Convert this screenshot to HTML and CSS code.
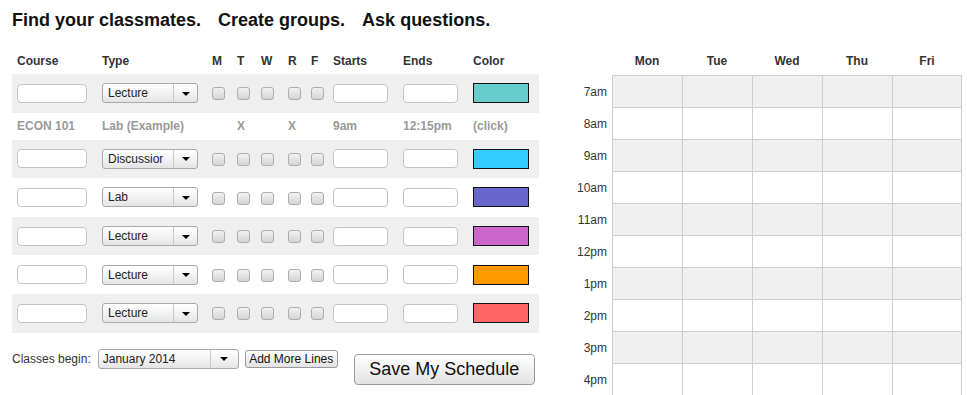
FILE: index.html
```html
<!DOCTYPE html>
<html>
<head>
<meta charset="utf-8">
<link rel="stylesheet" href="styles.css">
</head>
<body>
<div class="page">
  <h1 class="title"><span>Find your classmates.</span><span>Create groups.</span><span>Ask questions.</span></h1>
  <div class="main">
    <div class="left">
      <table class="sched">
        <colgroup>
          <col class="c-course"><col class="c-type"><col class="c-m"><col class="c-t"><col class="c-w"><col class="c-r"><col class="c-f"><col class="c-start"><col class="c-end"><col class="c-color">
        </colgroup>
        <tr class="head">
          <th>Course</th><th>Type</th><th>M</th><th>T</th><th>W</th><th>R</th><th>F</th><th>Starts</th><th>Ends</th><th>Color</th>
        </tr>
        <tr class="row gray">
          <td><span class="txt"></span></td>
          <td><span class="sel"><span class="sel-text">Lecture</span><span class="sel-arrow"><i></i></span></span></td>
          <td><span class="cb"></span></td><td><span class="cb"></span></td><td><span class="cb"></span></td><td><span class="cb"></span></td><td><span class="cb"></span></td>
          <td><span class="txt short"></span></td><td><span class="txt short"></span></td>
          <td><span class="swatch teal"></span></td>
        </tr>
        <tr class="example">
          <td>ECON 101</td><td>Lab (Example)</td><td></td><td>X</td><td></td><td>X</td><td></td><td>9am</td><td>12:15pm</td><td>(click)</td>
        </tr>
        <tr class="row gray">
          <td><span class="txt"></span></td>
          <td><span class="sel"><span class="sel-text">Discussion</span><span class="sel-arrow"><i></i></span></span></td>
          <td><span class="cb"></span></td><td><span class="cb"></span></td><td><span class="cb"></span></td><td><span class="cb"></span></td><td><span class="cb"></span></td>
          <td><span class="txt short"></span></td><td><span class="txt short"></span></td>
          <td><span class="swatch sky"></span></td>
        </tr>
        <tr class="row">
          <td><span class="txt"></span></td>
          <td><span class="sel"><span class="sel-text">Lab</span><span class="sel-arrow"><i></i></span></span></td>
          <td><span class="cb"></span></td><td><span class="cb"></span></td><td><span class="cb"></span></td><td><span class="cb"></span></td><td><span class="cb"></span></td>
          <td><span class="txt short"></span></td><td><span class="txt short"></span></td>
          <td><span class="swatch violet"></span></td>
        </tr>
        <tr class="row gray">
          <td><span class="txt"></span></td>
          <td><span class="sel"><span class="sel-text">Lecture</span><span class="sel-arrow"><i></i></span></span></td>
          <td><span class="cb"></span></td><td><span class="cb"></span></td><td><span class="cb"></span></td><td><span class="cb"></span></td><td><span class="cb"></span></td>
          <td><span class="txt short"></span></td><td><span class="txt short"></span></td>
          <td><span class="swatch orchid"></span></td>
        </tr>
        <tr class="row">
          <td><span class="txt"></span></td>
          <td><span class="sel"><span class="sel-text">Lecture</span><span class="sel-arrow"><i></i></span></span></td>
          <td><span class="cb"></span></td><td><span class="cb"></span></td><td><span class="cb"></span></td><td><span class="cb"></span></td><td><span class="cb"></span></td>
          <td><span class="txt short"></span></td><td><span class="txt short"></span></td>
          <td><span class="swatch orange"></span></td>
        </tr>
        <tr class="row gray">
          <td><span class="txt"></span></td>
          <td><span class="sel"><span class="sel-text">Lecture</span><span class="sel-arrow"><i></i></span></span></td>
          <td><span class="cb"></span></td><td><span class="cb"></span></td><td><span class="cb"></span></td><td><span class="cb"></span></td><td><span class="cb"></span></td>
          <td><span class="txt short"></span></td><td><span class="txt short"></span></td>
          <td><span class="swatch red"></span></td>
        </tr>
      </table>
      <div class="controls">
        <span class="label">Classes begin:</span>
        <span class="sel month"><span class="sel-text">January 2014</span><span class="sel-arrow"><i></i></span></span>
        <button class="btn small">Add More Lines</button>
        <button class="btn big">Save My Schedule</button>
      </div>
    </div>
    <div class="cal">
      <div class="ch"></div><div class="ch">Mon</div><div class="ch">Tue</div><div class="ch">Wed</div><div class="ch">Thu</div><div class="ch">Fri</div>

      <div class="tl">7am</div><div class="cell g"></div><div class="cell g"></div><div class="cell g"></div><div class="cell g"></div><div class="cell g last"></div>
      <div class="tl">8am</div><div class="cell"></div><div class="cell"></div><div class="cell"></div><div class="cell"></div><div class="cell last"></div>
      <div class="tl">9am</div><div class="cell g"></div><div class="cell g"></div><div class="cell g"></div><div class="cell g"></div><div class="cell g last"></div>
      <div class="tl">10am</div><div class="cell"></div><div class="cell"></div><div class="cell"></div><div class="cell"></div><div class="cell last"></div>
      <div class="tl">11am</div><div class="cell g"></div><div class="cell g"></div><div class="cell g"></div><div class="cell g"></div><div class="cell g last"></div>
      <div class="tl">12pm</div><div class="cell"></div><div class="cell"></div><div class="cell"></div><div class="cell"></div><div class="cell last"></div>
      <div class="tl">1pm</div><div class="cell g"></div><div class="cell g"></div><div class="cell g"></div><div class="cell g"></div><div class="cell g last"></div>
      <div class="tl">2pm</div><div class="cell"></div><div class="cell"></div><div class="cell"></div><div class="cell"></div><div class="cell last"></div>
      <div class="tl">3pm</div><div class="cell g"></div><div class="cell g"></div><div class="cell g"></div><div class="cell g"></div><div class="cell g last"></div>
      <div class="tl">4pm</div><div class="cell"></div><div class="cell"></div><div class="cell"></div><div class="cell"></div><div class="cell last"></div>
    </div>
  </div>
</div>
</body>
</html>
```
FILE: styles.css
```css
html, body {
  margin: 0;
  padding: 0;
  background: #fff;
  overflow: hidden;
}
body {
  font-family: "Liberation Sans", Arial, sans-serif;
  color: #333;
  font-size: 12px;
}
.page {
  padding: 9px 0 0 12px;
}
.title {
  margin: 0;
  font-size: 18px;
  line-height: 22px;
  font-weight: bold;
  color: #111;
  display: flex;
  gap: 17px;
}
.main {
  display: flex;
  gap: 21px;
  margin-top: 16px;
  align-items: flex-start;
}
.left {
  width: 527px;
}
.sched {
  border-collapse: collapse;
  border-spacing: 0;
  table-layout: fixed;
  width: 527px;
}
.c-course { width: 85px; }
.c-type { width: 110px; }
.c-m { width: 25px; }
.c-t { width: 24px; }
.c-w { width: 27px; }
.c-r { width: 23px; }
.c-f { width: 22px; }
.c-start { width: 70px; }
.c-end { width: 70px; }
.c-color { width: 71px; }
.sched th, .sched td {
  padding: 0 0 0 5px;
  text-align: left;
  vertical-align: middle;
  white-space: nowrap;
  overflow: hidden;
}
.sched th {
  height: 27px;
  font-weight: bold;
  font-size: 12px;
  color: #333;
}
.row td {
  height: 38.6px;
}
.row td > span { vertical-align: middle; }
.gray td {
  background: #efefef;
}
.example td {
  height: 27px;
  font-weight: bold;
  color: #999;
}
.txt {
  display: inline-block;
  box-sizing: border-box;
  width: 70px;
  height: 19px;
  background: #fff;
  border: 1px solid #c4c4c4;
  border-radius: 4px;
}
.txt.short {
  width: 55px;
}
.sel {
  display: inline-flex;
  box-sizing: border-box;
  width: 96px;
  height: 20px;
  border: 1px solid #a9a9a9;
  border-radius: 3px;
  background: linear-gradient(#ffffff, #f3f3f3 50%, #e4e4e4);
  overflow: hidden;
}
.sel-text {
  flex: 1;
  min-width: 0;
  overflow: hidden;
  white-space: nowrap;
  padding-left: 5px;
  margin-right: 10px;
  font-size: 12px;
  line-height: 18px;
  color: #222;
}
.sel-arrow {
  width: 23px;
  flex: none;
  border-left: 1px solid #c8c8c8;
  display: flex;
  align-items: center;
  justify-content: center;
}
.sel-arrow i {
  width: 0;
  height: 0;
  border-left: 4px solid transparent;
  border-right: 4px solid transparent;
  border-top: 4px solid #000;
  margin-top: 1px;
}
.cb {
  display: inline-block;
  box-sizing: border-box;
  width: 13px;
  height: 13px;
  border: 1px solid #adadad;
  border-radius: 3px;
  background: linear-gradient(#f2f2f2, #d4d4d4);
}
.swatch {
  display: inline-block;
  box-sizing: border-box;
  width: 56px;
  height: 20px;
  border: 1px solid #111;
}
.teal { background: #66cccc; }
.sky { background: #33ccff; }
.violet { background: #6666cc; }
.orchid { background: #cc66cc; }
.orange { background: #ff9900; }
.red { background: #ff6666; }

.controls {
  display: flex;
  align-items: flex-start;
  margin-top: 16px;
}
.label {
  line-height: 20px;
  font-size: 12px;
  color: #333;
  margin-right: 7px;
}
.sel.month {
  width: 141px;
}
.sel.month .sel-text {
  padding-left: 4px;
  margin-right: 0;
}
.sel.month .sel-arrow {
  width: 27px;
}
.btn {
  font-family: "Liberation Sans", Arial, sans-serif;
  border: 1px solid #9a9a9a;
  background: linear-gradient(#ffffff, #f1f1f1 50%, #e2e2e2);
  color: #111;
  padding: 0;
  margin: 0;
}
.btn.small {
  margin: 1px 0 0 6px;
  width: 93px;
  height: 18px;
  font-size: 12px;
  line-height: 16px;
  border-radius: 3px;
}
.btn.big {
  margin: 5px 0 0 16px;
  width: 181px;
  height: 31px;
  font-size: 18px;
  border-radius: 4px;
}

.cal {
  display: grid;
  grid-template-columns: 52px repeat(5, 70px);
  grid-auto-rows: 32px;
  grid-template-rows: 28px;
}
.ch {
  font-weight: bold;
  font-size: 12px;
  color: #333;
  text-align: center;
  line-height: 28px;
}
.tl {
  text-align: right;
  padding-right: 5px;
  font-size: 12px;
  color: #333;
  line-height: 34px;
}
.cell {
  border-top: 1px solid #cdcdcd;
  border-left: 1px solid #cdcdcd;
}
.cell.last {
  border-right: 1px solid #cdcdcd;
}
.cell.g {
  background: #efefef;
}
```
